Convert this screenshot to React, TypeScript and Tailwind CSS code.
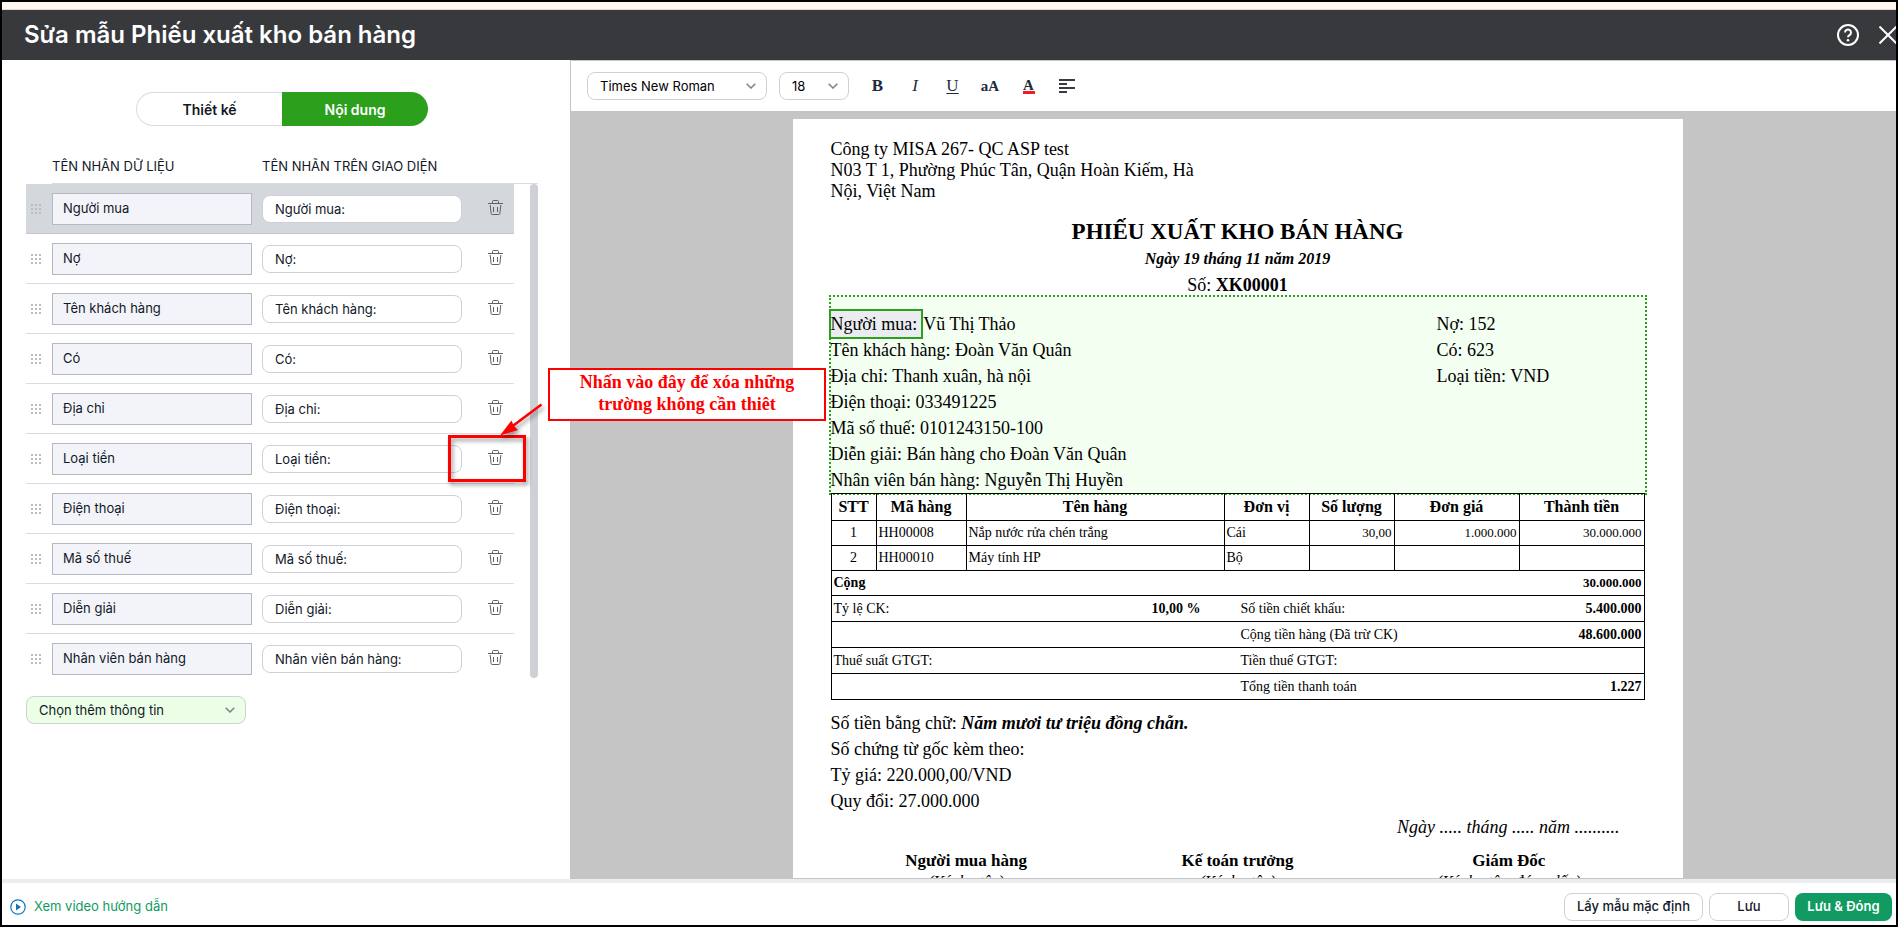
import React from 'react';

const fields = [
  'Người mua',
  'Nợ',
  'Tên khách hàng',
  'Có',
  'Địa chỉ',
  'Loại tiền',
  'Điện thoại',
  'Mã số thuế',
  'Diễn giải',
  'Nhân viên bán hàng',
];

const infoLeft = [
  'Tên khách hàng: Đoàn Văn Quân',
  'Địa chỉ: Thanh xuân, hà nội',
  'Điện thoại: 033491225',
  'Mã số thuế: 0101243150-100',
  'Diễn giải: Bán hàng cho Đoàn Văn Quân',
  'Nhân viên bán hàng: Nguyễn Thị Huyền',
];

const infoRight = ['Nợ: 152', 'Có: 623', 'Loại tiền: VND'];

const columns = ['STT', 'Mã hàng', 'Tên hàng', 'Đơn vị', 'Số lượng', 'Đơn giá', 'Thành tiền'];

const items = [
  { code: 'HH00008', name: 'Nắp nước rửa chén trắng', unit: 'Cái', qty: '30,00', price: '1.000.000', total: '30.000.000' },
  { code: 'HH00010', name: 'Máy tính HP', unit: 'Bộ', qty: '', price: '', total: '' },
];

const summary = [
  { label: 'Tỷ lệ CK:', value: '10,00 %', name: 'Số tiền chiết khấu:', total: '5.400.000' },
  { label: '', value: '', name: 'Cộng tiền hàng (Đã trừ CK)', total: '48.600.000' },
  { label: 'Thuế suất GTGT:', value: '', name: 'Tiền thuế GTGT:', total: '' },
  { label: '', value: '', name: 'Tổng tiền thanh toán', total: '1.227' },
];

const signers = [
  { title: 'Người mua hàng', note: '(Ký, họ tên)' },
  { title: 'Kế toán trưởng', note: '(Ký, họ tên)' },
  { title: 'Giám Đốc', note: '(Ký, họ tên, đóng dấu)' },
];

const GripIcon = () => (
  <svg width="10" height="10" viewBox="0 0 10 10" fill="#b8bcc3" aria-hidden="true">
    {[0, 4, 8].map((y) => [0, 4, 8].map((x) => <rect key={`${x}-${y}`} x={x} y={y} width="2" height="2" />))}
  </svg>
);

const TrashIcon = () => (
  <svg width="15" height="15" viewBox="0 0 15 15" fill="none" stroke="#5f6166" aria-hidden="true">
    <path d="M0 3.5h15M4.500 3.500V1.500a1 1 0 0 1 1-1h4a1 1 0 0 1 1 1v2M2.200 5l.9 8.500q.1 1 1.100 1h6.600q1 0 1.100-1L12.800 5M5.500 7v5M9.500 7v5" />
  </svg>
);

const Chevron = () => (
  <svg className="pointer-events-none absolute right-[11px] top-1/2 -translate-y-1/2" width="10" height="6" viewBox="0 0 10 6" fill="none" stroke="#7d8187" strokeWidth="1.5" aria-hidden="true">
    <path d="M0.700 0.700 5 5 9.300 0.700" />
  </svg>
);

const Annotation = () => (
  <div className="pointer-events-none absolute left-[422px] top-px z-10">
    <div className="h-[47px] w-[78px] border-[3px] border-[#fe0000] drop-shadow-[2px_3px_2px_rgba(0,0,0,0.4)]" />
    <svg className="absolute left-12 top-[-34px] overflow-visible drop-shadow-[2px_3px_2px_rgba(0,0,0,0.4)]" width="48" height="36" viewBox="0 0 48 36" aria-hidden="true">
      <path d="M45.500 3.500 16 25.500" stroke="#fe0000" strokeWidth="2.5" />
      <path d="M4 34.500 15.500 19.500l2 5 4.500 4.500z" fill="#fe0000" />
    </svg>
    <p className="absolute left-[100px] top-[-67px] w-[278px] border-2 border-[#fe0000] bg-white px-5 pb-1 pt-px text-center font-['Liberation_Serif',serif] text-[18px] font-bold leading-[22px] text-[#fe0000]">
      Nhấn vào đây để xóa những trường không cần thiêt
    </p>
  </div>
);

const FieldRow: React.FC<{ name: string; active: boolean; last: boolean; marked: boolean }> = ({ name, active, last, marked }) => (
  <li
    className={`relative flex h-[50px] items-center border-b pl-[5px] pt-px ${
      active ? 'border-[#c3c6cb] bg-[#d4d8dd]' : last ? 'border-transparent' : 'border-[#d9dbde]'
    }`}
  >
    <GripIcon />
    <input
      readOnly
      aria-label={`Tên nhãn dữ liệu ${name}`}
      value={name}
      className="ml-[11px] h-8 w-[200px] border border-[#b5b9c1] bg-[#f3f4f9] px-2.5 pb-[3px] text-[13px] outline-none"
    />
    <input
      aria-label={`Tên nhãn trên giao diện ${name}`}
      defaultValue={`${name}:`}
      className="ml-2.5 h-7 w-[200px] rounded-lg border border-[#cdd0d5] bg-white px-3 text-[13px] outline-none"
    />
    <button type="button" aria-label={`Xóa ${name}`} className="ml-[26px] pb-[3px]">
      <TrashIcon />
    </button>
    {marked && <Annotation />}
  </li>
);

const FieldPanel = () => (
  <aside className="w-[568px] shrink-0 pl-6 pt-8">
    <div className="ml-[110px] flex text-[14px]">
      <button type="button" className="h-[34px] w-[146px] rounded-l-full border border-r-0 border-[#d9dbde] font-semibold">
        Thiết kế
      </button>
      <button type="button" className="h-[34px] w-[146px] rounded-r-full bg-[#2ca01c] font-semibold text-white">
        Nội dung
      </button>
    </div>
    <div className="ml-[26px] mt-[30px] flex h-7 w-[486px] border-b border-[#d9dbde] text-[13px] leading-5">
      <span className="w-[210px]">TÊN NHÃN DỮ LIỆU</span>
      <span>TÊN NHÃN TRÊN GIAO DIỆN</span>
    </div>
    <div className="flex w-[512px] justify-between">
      <ul className="w-[488px]">
        {fields.map((name, i) => (
          <FieldRow key={name} name={name} active={i === 0} last={i === fields.length - 1} marked={name === 'Loại tiền'} />
        ))}
      </ul>
      <div className="h-[494px] w-2 rounded-full bg-[#cdd1d5]" />
    </div>
    <div className="relative mt-3 w-[220px]">
      <select aria-label="Chọn thêm thông tin" className="block h-7 w-full appearance-none rounded-lg border border-[#cdd0d5] bg-[#ebffe6] px-3 pt-0.5 text-[13px] outline-none">
        <option>Chọn thêm thông tin</option>
      </select>
      <Chevron />
    </div>
  </aside>
);

const Toolbar = () => (
  <div className="flex h-[51px] shrink-0 items-center border-t border-[#c5c5c5] bg-white pl-4 text-[#1f2a3d]">
    <div className="relative w-[180px]">
      <select aria-label="Phông chữ" className="block h-7 w-full appearance-none rounded-lg border border-[#cdd0d5] px-3 pt-0.5 text-[13px] text-black outline-none">
        <option>Times New Roman</option>
      </select>
      <Chevron />
    </div>
    <div className="relative ml-3 w-[70px]">
      <select aria-label="Cỡ chữ" className="block h-7 w-full appearance-none rounded-lg border border-[#cdd0d5] px-3 pt-0.5 text-[13px] text-black outline-none">
        <option>18</option>
      </select>
      <Chevron />
    </div>
    <div className="ml-2.5 flex items-center font-['Liberation_Serif',serif] text-[17px]">
      <button type="button" aria-label="Đậm" className="w-[37px] font-bold">B</button>
      <button type="button" aria-label="Nghiêng" className="w-[38px] italic">I</button>
      <button type="button" aria-label="Gạch chân" className="w-[37px] underline underline-offset-2">U</button>
      <button type="button" aria-label="Hoa thường" className="w-[38px] text-[15px] font-bold">aA</button>
      <button type="button" aria-label="Màu chữ" className="flex w-[39px] justify-center text-[15px] font-bold">
        <span className="w-3 border-b-[3px] border-[#ee1c25] leading-3">A</span>
      </button>
      <button type="button" aria-label="Căn lề" className="flex w-[38px] justify-center">
        <svg width="16" height="14" viewBox="0 0 16 14" fill="#3a3b40" aria-hidden="true">
          <path d="M0 0h16v2H0zM0 4h8v2H0zM0 8h16v2H0zM0 12h8v2H0z" />
        </svg>
      </button>
    </div>
  </div>
);

const ItemTable = () => (
  <table className="-mt-0.5 w-full table-fixed border-collapse border border-black text-[14px] leading-5">
    <colgroup>
      <col className="w-[45px]" />
      <col className="w-[90px]" />
      <col />
      <col className="w-[85px]" />
      <col className="w-[85px]" />
      <col className="w-[125px]" />
      <col className="w-[125px]" />
    </colgroup>
    <thead>
      <tr className="h-[27px] text-[16px]">
        {columns.map((c) => (
          <th key={c} className="border border-black">{c}</th>
        ))}
      </tr>
    </thead>
    <tbody>
      {items.map((item, i) => (
        <tr key={item.code} className="h-[25px]">
          <td className="border border-black text-center">{i + 1}</td>
          <td className="border border-black px-0.5">{item.code}</td>
          <td className="border border-black px-0.5">{item.name}</td>
          <td className="border border-black px-0.5">{item.unit}</td>
          <td className="border border-black px-0.5 text-right text-[13px]">{item.qty}</td>
          <td className="border border-black px-0.5 text-right text-[13px]">{item.price}</td>
          <td className="border border-black px-0.5 text-right text-[13px]">{item.total}</td>
        </tr>
      ))}
      <tr className="h-[25px] border-b border-black font-bold">
        <td colSpan={6} className="px-0.5">Cộng</td>
        <td className="px-0.5 text-right text-[13px]">30.000.000</td>
      </tr>
      {summary.map((row) => (
        <tr key={row.name} className="h-[26px] border-b border-black">
          <td colSpan={7} className="px-0.5">
            <div className="flex">
              <span className="flex w-[367px] justify-between">
                <span>{row.label}</span>
                <span className="font-bold">{row.value}</span>
              </span>
              <span className="flex-1 pl-10">{row.name}</span>
              <span className="font-bold">{row.total}</span>
            </div>
          </td>
        </tr>
      ))}
    </tbody>
  </table>
);

const Receipt = () => (
  <article className="mx-auto w-[890px] bg-white px-[38px] pt-5 font-['Liberation_Serif',serif] text-[18px] text-black">
    <div className="w-[380px] leading-[21px]">
      <p>Công ty MISA 267- QC ASP test</p>
      <p>N03 T 1, Phường Phúc Tân, Quận Hoàn Kiếm, Hà Nội, Việt Nam</p>
    </div>
    <div className="-mb-[3px] mt-4 text-center leading-[26px]">
      <h2 className="text-[23px] font-bold leading-7">PHIẾU XUẤT KHO BÁN HÀNG</h2>
      <p className="text-[16px] font-bold italic">Ngày 19 tháng 11 năm 2019</p>
      <p>Số: <b>XK00001</b></p>
    </div>
    <section className="-mx-0.5 flex h-[200px] border-2 border-dotted border-[#2ca01c] bg-[#f3fff1] pt-[14px] leading-[26px]">
      <div className="w-[606px]">
        <p className="flex items-center">
          <span className="-my-0.5 -ml-0.5 border-2 border-[#2ca01c] bg-[#ebecf1] pr-1">Người mua:</span>
          Vũ Thị Thảo
        </p>
        {infoLeft.map((line) => (
          <p key={line}>{line}</p>
        ))}
      </div>
      <div>
        {infoRight.map((line) => (
          <p key={line}>{line}</p>
        ))}
      </div>
    </section>
    <ItemTable />
    <div className="mt-2.5 leading-[26px]">
      <p>Số tiền bằng chữ: <b className="italic">Năm mươi tư triệu đồng chẵn.</b></p>
      <p>Số chứng từ gốc kèm theo:</p>
      <p>Tỷ giá: 220.000,00/VND</p>
      <p>Quy đổi: 27.000.000</p>
      <p className="pr-[25px] text-right italic">Ngày ..... tháng ..... năm ..........</p>
    </div>
    <div className="mt-2.5 grid grid-cols-3 text-center leading-[22px]">
      {signers.map((s) => (
        <div key={s.title}>
          <p className="text-[17px] font-bold">{s.title}</p>
          <p className="text-[16px] italic leading-5">{s.note}</p>
        </div>
      ))}
    </div>
  </article>
);

export default function App() {
  return (
    <div className="flex h-screen flex-col overflow-hidden border-2 border-black bg-white font-[Inter,sans-serif] text-[13px] text-[#111827]">
      <div className="h-2 shrink-0 border-b border-[#e3d9d4] bg-[#fff6f1]" />
      <header className="flex h-[50px] shrink-0 items-center overflow-hidden bg-[#38393d] pl-[22px] text-white">
        <h1 className="flex-1 text-[24px] font-semibold">Sửa mẫu Phiếu xuất kho bán hàng</h1>
        <button type="button" aria-label="Trợ giúp">
          <svg width="22" height="22" viewBox="0 0 22 22" fill="none" stroke="white" strokeWidth="2" aria-hidden="true">
            <circle cx="11" cy="11" r="10" />
            <path d="M8 8.500a3 3 0 1 1 4.500 2.600Q11 12 11 13.300" />
            <circle cx="11" cy="16.200" r="1.300" fill="white" stroke="none" />
          </svg>
        </button>
        <button type="button" aria-label="Đóng" className="-mr-px ml-5">
          <svg width="18" height="18" viewBox="0 0 18 18" stroke="white" strokeWidth="2" aria-hidden="true">
            <path d="M0.500 0.500l17 17M17.500 0.500l-17 17" />
          </svg>
        </button>
      </header>
      <main className="flex min-h-0 flex-1">
        <FieldPanel />
        <div className="flex min-w-0 flex-1 flex-col border-l border-[#c5c5c5]">
          <Toolbar />
          <div className="min-h-0 flex-1 overflow-hidden border-b border-[#c5c5c5] bg-[#c5c5c5] pl-2 pt-2">
            <Receipt />
          </div>
        </div>
      </main>
      <footer className="flex h-[46px] shrink-0 items-center gap-1.5 border-t-4 border-[#ebedf0] pl-2 pr-1 pt-1.5">
        <a href="#video" className="mr-auto flex items-center gap-2 text-[#119b62]">
          <svg width="16" height="16" viewBox="0 0 16 16" fill="none" aria-hidden="true">
            <circle cx="8" cy="8" r="7.200" stroke="#0b75bd" strokeWidth="1.200" />
            <path d="M6 4.500v7L11 8z" fill="#0b75bd" />
          </svg>
          Xem video hướng dẫn
        </a>
        <button type="button" className="h-7 w-[139px] rounded-lg border border-[#cdd0d5] font-medium">Lấy mẫu mặc định</button>
        <button type="button" className="h-7 w-20 rounded-lg border border-[#cdd0d5] font-medium">Lưu</button>
        <button type="button" className="h-7 w-[97px] rounded-lg bg-[#119b62] font-semibold text-white">Lưu &amp; Đóng</button>
      </footer>
    </div>
  );
}
